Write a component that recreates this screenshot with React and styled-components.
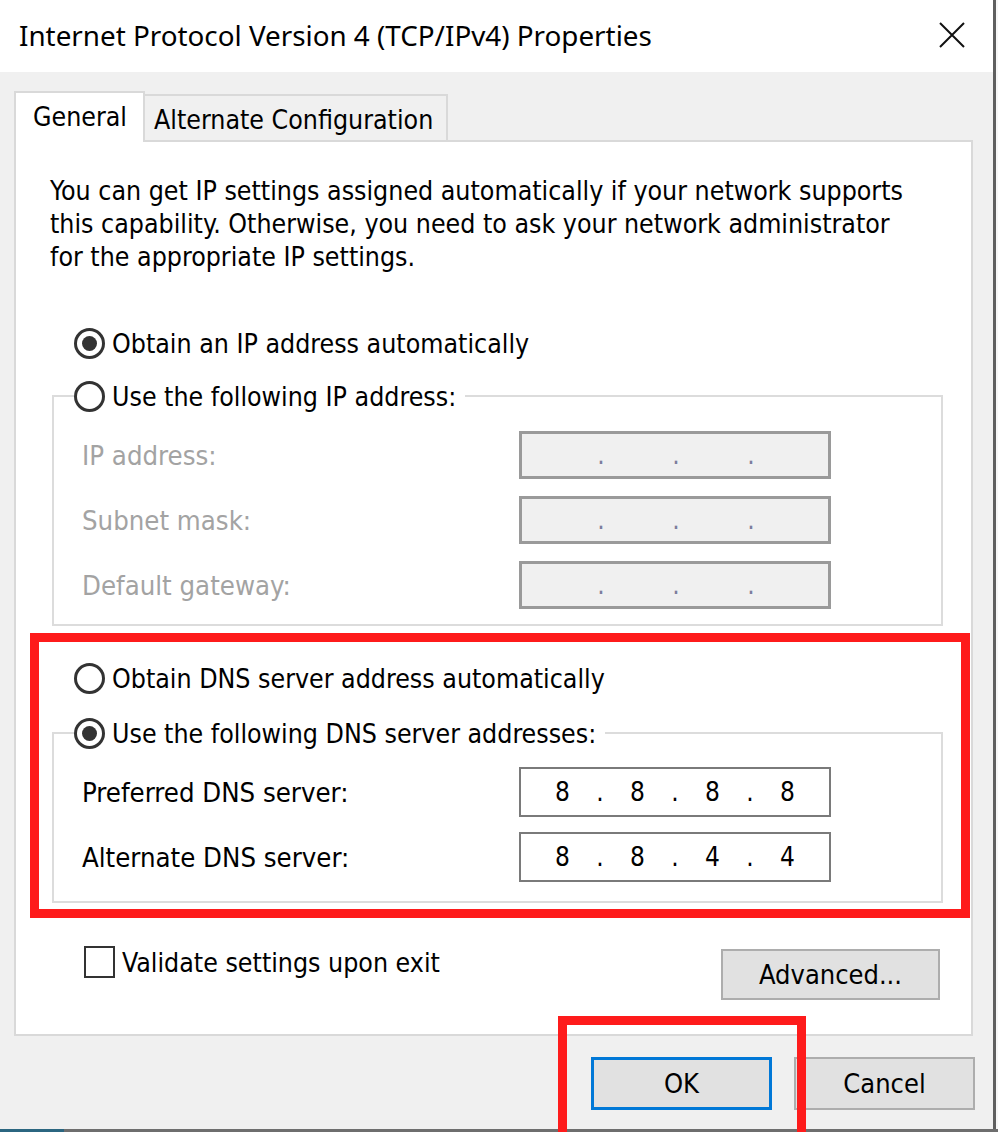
import styled, { createGlobalStyle } from 'styled-components';

const GlobalStyle = createGlobalStyle`
  html, body {
    margin: 0;
    padding: 0;
    overflow: hidden;
  }
  body {
    background: #f7f7f7;
    font-family: "DejaVu Sans", sans-serif;
    font-stretch: condensed;
    color: #000;
  }
  * { box-sizing: border-box; }
`;

const Screen = styled.div`
  position: relative;
  width: 998px;
  height: 1132px;
  display: flex;
  flex-direction: column;
`;

const Dialog = styled.div`
  width: 996px;
  height: 1129px;
  border-right: 3px solid #5f5f5f;
  background: #f0f0f0;
  display: flex;
  flex-direction: column;
`;

const TitleBar = styled.div`
  height: 72px;
  background: #fff;
  display: flex;
  align-items: center;
  justify-content: space-between;
  padding: 0 28px 2px 19px;
`;

const Title = styled.div`
  font-family: "Noto Sans", "Open Sans", sans-serif;
  font-stretch: normal;
  font-size: 27.8px;
  color: #000;
`;

const CloseIcon = () => (
  <svg width="26" height="26" viewBox="0 0 26 26">
    <path d="M1 1 L25 25 M25 1 L1 25" stroke="#111" strokeWidth="2" fill="none" />
  </svg>
);

const Body = styled.div`
  flex: 1;
  padding: 19px 18px 0 14px;
  display: flex;
  flex-direction: column;
`;

const Tabs = styled.div`
  display: flex;
  align-items: flex-end;
  height: 51px;
  position: relative;
  z-index: 1;
  margin-bottom: -2px;
`;

const Tab = styled.div`
  height: ${p => (p.$active ? '51px' : '48px')};
  width: ${p => p.$w}px;
  padding-left: ${p => (p.$active ? '17px' : '9px')};
  padding-top: 8px;
  line-height: 31px;
  background: ${p => (p.$active ? '#fff' : '#f0f0f0')};
  border: 2px solid #d9d9d9;
  border-bottom: ${p => (p.$active ? 'none' : '2px solid #d9d9d9')};
  border-left: ${p => (p.$active ? '2px solid #d9d9d9' : 'none')};
  font-size: 26.5px;
  white-space: nowrap;
`;

const Panel = styled.div`
  width: 959px;
  height: 896px;
  background: #fff;
  border: 2px solid #d9d9d9;
  padding: 32px 31px 0 0;
  display: flex;
  flex-direction: column;
`;

const Description = styled.p`
  margin: 0 0 0 34px;
  font-size: 26.5px;
  line-height: 33px;
  white-space: nowrap;
`;

const RadioRow = styled.label`
  display: flex;
  align-items: center;
  gap: 7px;
  height: 34px;
  font-size: 26.5px;
  margin-left: ${p => p.$ml || 0}px;
  margin-top: ${p => p.$mt || 0}px;
  white-space: nowrap;
`;

const RadioMark = styled.span`
  width: 31px;
  height: 31px;
  flex: none;
  border: 3px solid #333;
  border-radius: 50%;
  display: inline-flex;
  align-items: center;
  justify-content: center;
  &::after {
    content: '';
    width: 15px;
    height: 15px;
    border-radius: 50%;
    background: ${p => (p.$checked ? '#333' : 'transparent')};
  }
`;

const Radio = ({ checked, children, ...rest }) => (
  <RadioRow {...rest}>
    <RadioMark $checked={checked} />
    <span>{children}</span>
  </RadioRow>
);

const Group = styled.fieldset`
  margin: ${p => p.$mt}px 0 0 36px;
  width: 891px;
  padding: 0 0 ${p => p.$pb}px 20px;
  border: 2px solid #dcdcdc;
  min-inline-size: 0;
`;

const Legend = styled.legend`
  padding: 0 9px 0 0;
`;

const Fields = styled.div`
  display: grid;
  grid-template-columns: 437px 312px;
  row-gap: ${p => p.$gap}px;
  margin: ${p => p.$mt}px 0 0 8px;
`;

const FieldLabel = styled.div`
  font-size: 27.3px;
  display: flex;
  align-items: center;
  white-space: nowrap;
  color: ${p => (p.$disabled ? '#a3a3a3' : '#000')};
`;

const IpBox = styled.div`
  height: ${p => p.$h}px;
  display: flex;
  align-items: center;
  padding-left: 8px;
  border: ${p => (p.$disabled ? '3px solid #9a9a9a' : '2px solid #7a7a7a')};
  background: ${p => (p.$disabled ? '#f0f0f0' : '#fff')};
  font-size: 26px;
`;

const Octet = styled.span`
  width: 67px;
  text-align: center;
`;

const Dot = styled.span`
  width: 8px;
  text-align: center;
  color: ${p => (p.$disabled ? '#7d7d9d' : '#000')};
`;

const IpField = ({ value, disabled, h }) => {
  const parts = value ? value.split('.') : ['', '', '', ''];
  return (
    <IpBox $disabled={disabled} $h={h}>
      {parts.map((p, i) => (
        <span key={i} style={{ display: 'contents' }}>
          <Octet>{p}</Octet>
          {i < 3 && <Dot $disabled={disabled}>.</Dot>}
        </span>
      ))}
    </IpBox>
  );
};

const BottomRow = styled.div`
  display: flex;
  justify-content: space-between;
  align-items: flex-start;
  margin: 43px 0 0 68px;
`;

const CheckRow = styled.label`
  display: flex;
  align-items: center;
  gap: 7px;
  font-size: 26.5px;
  white-space: nowrap;
`;

const CheckBox = styled.span`
  width: 31px;
  height: 32px;
  border: 2px solid #333;
  background: #fff;
`;

const Button = styled.button`
  width: ${p => p.$w}px;
  height: ${p => p.$h}px;
  margin-top: ${p => p.$mt || 0}px;
  background: #e1e1e1;
  border: ${p => (p.$primary ? '3px solid #0078d7' : '2px solid #adadad')};
  font-family: inherit;
  font-stretch: condensed;
  font-size: 27px;
  color: #000;
  padding: 0;
`;

const ButtonRow = styled.div`
  display: flex;
  justify-content: flex-end;
  gap: 22px;
  margin-top: 21px;
`;

const Taskbar = styled.div`
  height: 3px;
  display: flex;
`;

const TaskSeg = styled.div`
  width: ${p => p.$w};
  background: ${p => p.$c};
`;

const Annotation = styled.div`
  position: absolute;
  left: ${p => p.$x}px;
  top: ${p => p.$y}px;
  width: ${p => p.$w}px;
  height: ${p => p.$h}px;
  border: 9px solid #fe1b1b;
  border-bottom: ${p => (p.$open ? 'none' : '9px solid #fe1b1b')};
  pointer-events: none;
`;

export default function App() {
  return (
    <Screen>
      <GlobalStyle />
      <Dialog>
        <TitleBar>
          <Title>Internet Protocol Version 4 (TCP/IPv4) Properties</Title>
          <CloseIcon />
        </TitleBar>
        <Body>
          <Tabs>
            <Tab $active $w={131}>General</Tab>
            <Tab $w={303}>Alternate Configuration</Tab>
          </Tabs>
          <Panel>
            <Description>
              You can get IP settings assigned automatically if your network supports<br />
              this capability. Otherwise, you need to ask your network administrator<br />
              for the appropriate IP settings.
            </Description>

            <Radio checked $ml={58} $mt={53}>Obtain an IP address automatically</Radio>
            <Group $mt={19} $pb={15}>
              <Legend>
                <Radio>Use the following IP address:</Radio>
              </Legend>
              <Fields $gap={17} $mt={18}>
                <FieldLabel $disabled>IP address:</FieldLabel>
                <IpField disabled h={48} />
                <FieldLabel $disabled>Subnet mask:</FieldLabel>
                <IpField disabled h={48} />
                <FieldLabel $disabled>Default gateway:</FieldLabel>
                <IpField disabled h={48} />
              </Fields>
            </Group>

            <Radio $ml={58} $mt={35}>Obtain DNS server address automatically</Radio>
            <Group $mt={21} $pb={19}>
              <Legend>
                <Radio checked>Use the following DNS server addresses:</Radio>
              </Legend>
              <Fields $gap={15} $mt={17}>
                <FieldLabel>Preferred DNS server:</FieldLabel>
                <IpField value="8.8.8.8" h={50} />
                <FieldLabel>Alternate DNS server:</FieldLabel>
                <IpField value="8.8.4.4" h={50} />
              </Fields>
            </Group>

            <BottomRow>
              <CheckRow>
                <CheckBox />
                <span>Validate settings upon exit</span>
              </CheckRow>
              <Button $w={219} $h={51} $mt={3}>Advanced...</Button>
            </BottomRow>
          </Panel>
          <ButtonRow>
            <Button $primary $w={181} $h={53}>OK</Button>
            <Button $w={181} $h={53}>Cancel</Button>
          </ButtonRow>
        </Body>
      </Dialog>
      <Taskbar>
        <TaskSeg $w="64px" $c="#2b6680" />
        <TaskSeg $w="934px" $c="#6e6e6e" />
      </Taskbar>
      <Annotation $x={30} $y={633} $w={940} $h={285} />
      <Annotation $x={558} $y={1016} $w={248} $h={116} $open />
    </Screen>
  );
}
